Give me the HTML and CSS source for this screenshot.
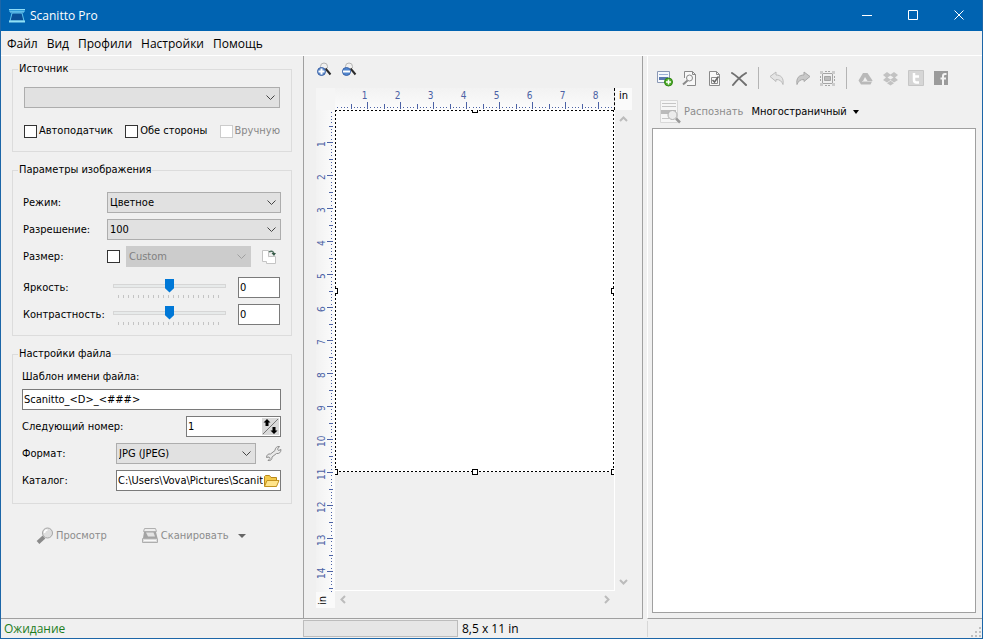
FILE: index.html
```html
<!DOCTYPE html>
<html lang="ru">
<head>
    <meta charset="UTF-8">
    <title>Scanitto Pro</title>
    <link rel="stylesheet" href="styles.css">
</head>
<body>

<div class="window">

    <header class="titlebar">
        <svg class="app-icon" width="18" height="16" viewBox="0 0 18 16">
            <path d="M1 1h16v3H1z" fill="#2f9bd8"/>
            <path d="M1 1.500h16M2 4h14" stroke="#8fdcf8"/>
            <path d="M4 5h10l2 8H2z" fill="#0a4f96" stroke="#5fc3ee"/>
            <path d="M1 12.500h16v2H1z" fill="#8fe0f5"/>
        </svg>
        <h1>Scanitto Pro</h1>
        <button class="win-btn" aria-label="Свернуть"><svg width="11" height="11" viewBox="0 0 11 11"><path d="M0 5.500h10"/></svg></button>
        <button class="win-btn" aria-label="Развернуть"><svg width="11" height="11" viewBox="0 0 11 11"><path d="M.5.5h9v9h-9z"/></svg></button>
        <button class="win-btn" aria-label="Закрыть"><svg width="11" height="11" viewBox="0 0 11 11"><path d="M.5.5l9 9M9.500.5l-9 9"/></svg></button>
    </header>

    <nav class="menu">
        <button>Файл</button>
        <button>Вид</button>
        <button>Профили</button>
        <button>Настройки</button>
        <button>Помощь</button>
    </nav>

    <main>

        <form class="settings">

            <fieldset class="source">
                <legend>Источник</legend>
                <select aria-label="Источник"><option></option></select>
                <div class="checks">
                    <label><input type="checkbox">Автоподатчик</label>
                    <label><input type="checkbox">Обе стороны</label>
                    <label class="off"><input type="checkbox" disabled>Вручную</label>
                </div>
            </fieldset>

            <fieldset class="image">
                <legend>Параметры изображения</legend>
                <div class="row">
                    <label for="mode">Режим:</label>
                    <select id="mode"><option>Цветное</option></select>
                </div>
                <div class="row">
                    <label for="dpi">Разрешение:</label>
                    <select id="dpi"><option>100</option></select>
                </div>
                <div class="row size">
                    <label for="size">Размер:</label>
                    <input type="checkbox" aria-label="Задать размер">
                    <select id="size" disabled><option>Custom</option></select>
                    <button type="button" class="icon-btn" aria-label="Повернуть">
                        <svg width="18" height="16" viewBox="0 0 18 16">
                            <path d="M1.500 1.500h6v11h-6z" fill="#fff" stroke="#c4c4c4"/>
                            <path d="M7.500 7.500h7v7h-9v-2" fill="#fff" stroke="#c4c4c4"/>
                            <path d="M8 3c2-1.500 4-1 5 1.500" fill="none" stroke="#4f6f5f" stroke-width="1.500"/>
                            <path d="M10.500 4H15L13 7z" fill="#355a48"/>
                        </svg>
                    </button>
                </div>
                <div class="row slider">
                    <label for="brightness">Яркость:</label>
                    <input type="range" id="brightness" min="-100" max="100" value="0">
                    <input type="text" aria-label="Яркость" value="0">
                </div>
                <div class="row slider">
                    <label for="contrast">Контрастность:</label>
                    <input type="range" id="contrast" min="-100" max="100" value="0">
                    <input type="text" aria-label="Контрастность" value="0">
                </div>
            </fieldset>

            <fieldset class="file">
                <legend>Настройки файла</legend>
                <label for="template">Шаблон имени файла:</label>
                <input type="text" id="template" value="Scanitto_&lt;D&gt;_&lt;###&gt;">
                <div class="row">
                    <label for="next">Следующий номер:</label>
                    <div class="field">
                        <input type="text" id="next" value="1">
                        <button type="button" class="spin" aria-label="Изменить номер">
                            <svg width="17" height="17" viewBox="0 0 17 17">
                                <path d="M16 1L1 16" stroke="#777"/>
                                <path d="M5 1l3.500 3.500h-2V8h-3V4.500h-2zM12 16l-3.500-3.500h2V9h3v3.500h2z"/>
                            </svg>
                        </button>
                    </div>
                </div>
                <div class="row">
                    <label for="format">Формат:</label>
                    <select id="format"><option>JPG (JPEG)</option></select>
                    <button type="button" class="icon-btn" aria-label="Параметры формата">
                        <svg width="17" height="17" viewBox="0 0 17 17">
                            <path d="M10 5.500c0-2.500 2-4.500 4.500-4L12.500 4l1 1.500 2.500-1c0 3-2 4.500-4.500 4L7 12c.3 2.500-1.500 4-4 3.500L5 13.500 4 12l-2.500.5C1.500 10 3.300 8.500 5.500 9z" fill="#e8e8e8" stroke="#8e8e8e"/>
                        </svg>
                    </button>
                </div>
                <div class="row">
                    <label for="folder">Каталог:</label>
                    <div class="field">
                        <input type="text" id="folder" value="C:\Users\Vova\Pictures\Scanitto Pro">
                        <button type="button" class="browse" aria-label="Обзор">
                            <svg width="17" height="15" viewBox="0 0 17 15">
                                <path d="M1.500 13V3.500l1-1h4l1.500 2h5.500V13z" fill="#f3c94b" stroke="#b98a1c"/>
                                <path d="M1.500 13.500L4 7.500h12l-2.500 6z" fill="#ffe48a" stroke="#c2921f"/>
                            </svg>
                        </button>
                    </div>
                </div>
            </fieldset>

            <div class="actions">
                <button type="button" disabled>
                    <svg width="18" height="18" viewBox="0 0 18 18">
                        <path d="M8 10l-6 5.500" stroke="#8a8a8a" stroke-width="4"/>
                        <circle cx="11.500" cy="6" r="5" fill="#dedede" stroke="#a5a5a5"/>
                        <path d="M8.500 6a3 3 0 0 1 3-3" fill="none" stroke="#fff" stroke-width="1.500"/>
                    </svg>
                    Просмотр
                </button>
                <button type="button" disabled>
                    <svg width="18" height="18" viewBox="0 0 18 18">
                        <path d="M3.500 1.500h11l1 3h-13z" fill="#ededed" stroke="#b0b0b0"/>
                        <path d="M3 5h12l1.500 6H2z" fill="#a4a4a4"/>
                        <path d="M5 5.500l2 4h7l-1.500-4z" fill="#e3e3e3"/>
                        <path d="M1.500 11.500h15v4h-15z" fill="#dcdcdc" stroke="#aeaeae"/>
                        <path d="M3 13.500h12" stroke="#f8f8f8"/>
                    </svg>
                    Сканировать
                    <i class="drop"></i>
                </button>
            </div>

        </form>

        <section class="preview">
            <div class="zoom">
                <button aria-label="Увеличить">
                    <svg width="16" height="16" viewBox="0 0 16 16">
                        <path d="M4.500 6V4.500a3.500 3.500 0 0 1 7 0V6" fill="none" stroke="#b5b5b5"/>
                        <path d="M9.500 6.500l5 6" stroke="#2b2b2b" stroke-width="2"/>
                        <circle cx="5.500" cy="9.500" r="4" fill="#5f8ccc" stroke="#3c62a6"/>
                        <path d="M5.500 6.500v6M2.500 9.500h6" stroke="#fff" stroke-width="2"/>
                    </svg>
                </button>
                <button aria-label="Уменьшить">
                    <svg width="16" height="16" viewBox="0 0 16 16">
                        <path d="M4.500 6V4.500a3.500 3.500 0 0 1 7 0V6" fill="none" stroke="#b5b5b5"/>
                        <path d="M9.500 6.500l5 6" stroke="#2b2b2b" stroke-width="2"/>
                        <circle cx="5.500" cy="9.500" r="4" fill="#4f86cf" stroke="#3c62a6"/>
                        <path d="M2 9.500h7" stroke="#fff" stroke-width="2"/>
                    </svg>
                </button>
            </div>

            <div class="canvas">
                <div class="corner"></div>

                <div class="ruler-x">
                    <ol>
                        <li>1</li><li>2</li><li>3</li><li>4</li><li>5</li><li>6</li><li>7</li><li>8</li>
                    </ol>
                    <svg class="ticks" width="100%" height="8">
                        <defs>
                            <pattern id="tx" x="32" width="33" height="8" patternUnits="userSpaceOnUse">
                                <path d="M0 0h1v7H0zM17 2h1v5h-1zM3 5h1v1H3zM7 5h1v1H7zM10 5h1v1h-1zM13 5h1v1h-1zM20 5h1v1h-1zM23 5h1v1h-1zM26 5h1v1h-1zM30 5h1v1h-1z" fill="#4c62a5"/>
                            </pattern>
                        </defs>
                        <rect width="100%" height="8" fill="url(#tx)"/>
                    </svg>
                </div>
                <div class="unit">in</div>

                <div class="ruler-y">
                    <ol>
                        <li>1</li><li>2</li><li>3</li><li>4</li><li>5</li><li>6</li><li>7</li>
                        <li>8</li><li>9</li><li>10</li><li>11</li><li>12</li><li>13</li><li>14</li>
                    </ol>
                    <svg class="ticks" width="8" height="100%">
                        <defs>
                            <pattern id="ty" y="32" width="8" height="33" patternUnits="userSpaceOnUse">
                                <path d="M0 0h6v1H0zM2 17h4v1H2zM4 3h1v1H4zM4 7h1v1H4zM4 10h1v1H4zM4 13h1v1H4zM4 20h1v1H4zM4 23h1v1H4zM4 26h1v1H4zM4 30h1v1H4z" fill="#4c62a5"/>
                            </pattern>
                        </defs>
                        <rect width="8" height="100%" fill="url(#ty)"/>
                    </svg>
                    <span>in</span>
                </div>

                <div class="bed">
                    <div class="page">
                        <i class="n"></i><i class="w"></i><i class="e"></i>
                        <i class="sw"></i><i class="s"></i><i class="se"></i>
                    </div>
                </div>

                <div class="scroll-y">
                    <svg width="9" height="6" viewBox="0 0 9 6"><path d="M1 5l3.500-3.500L8 5"/></svg>
                    <svg width="9" height="6" viewBox="0 0 9 6"><path d="M1 1l3.500 3.500L8 1"/></svg>
                </div>
                <div class="scroll-x">
                    <svg width="6" height="9" viewBox="0 0 6 9"><path d="M5 1L1.500 4.500 5 8"/></svg>
                    <svg width="6" height="9" viewBox="0 0 6 9"><path d="M1 1l3.500 3.500L1 8"/></svg>
                </div>
            </div>
        </section>

        <section class="result">
            <div class="tools">
                <button aria-label="Добавить">
                    <svg width="17" height="17" viewBox="0 0 17 17">
                        <path d="M1.500 1.500h12v11h-12z" fill="#f6f9fd" stroke="#8a98b5"/>
                        <path d="M3 4.500h9" stroke="#9db2d6"/>
                        <path d="M3 8.500h9" stroke="#5b79ae" stroke-width="3"/>
                        <circle cx="12.500" cy="12" r="4" fill="#4fae2a" stroke="#2f8414"/>
                        <path d="M12.500 9.500v5M10 12h5" stroke="#fff" stroke-width="1.500"/>
                    </svg>
                </button>
                <button aria-label="Просмотр страницы">
                    <svg width="17" height="17" viewBox="0 0 17 17" fill="none" stroke="#8a8a8a">
                        <path d="M3.500 8V1.500h8l3 3v11H6M11.500 1.500v3h3" fill="#f8f8f8"/>
                        <circle cx="8.500" cy="8" r="3"/>
                        <path d="M6.500 10.500L2 14.500" stroke-width="2"/>
                    </svg>
                </button>
                <button aria-label="Выбрать страницу">
                    <svg width="17" height="17" viewBox="0 0 17 17" fill="none" stroke="#8a8a8a">
                        <path d="M3.500 1.500h7l3 3v11h-10zM10.500 1.500v3h3" fill="#f8f8f8"/>
                        <path d="M5.500 7.500h6v6h-6z"/>
                        <path d="M6.500 10l2 2 4-5.500" stroke="#666" stroke-width="1.500"/>
                    </svg>
                </button>
                <button aria-label="Удалить">
                    <svg width="17" height="17" viewBox="0 0 17 17" fill="none" stroke="#707070" stroke-width="2" stroke-linecap="round">
                        <path d="M1 3c5 3 9 7 14 12M15 3C10 6 6 10 2 15"/>
                    </svg>
                </button>
                <hr>
                <button aria-label="Отменить" disabled>
                    <svg width="17" height="17" viewBox="0 0 17 17">
                        <path d="M1 6.500L7 2v3c5 0 8 3 7 9.500C12.500 11 11 9.500 7 9.500v2z" fill="#e4e4e4" stroke="#bbb"/>
                    </svg>
                </button>
                <button aria-label="Вернуть" disabled>
                    <svg width="17" height="17" viewBox="0 0 17 17">
                        <path d="M16 6.500L10 2v3c-5 0-8 3-7 9.500C4.500 11 6 9.500 10 9.500v2z" fill="#c9c9c9" stroke="#a8a8a8"/>
                    </svg>
                </button>
                <button aria-label="Обрезать" disabled>
                    <svg width="17" height="17" viewBox="0 0 17 17" fill="none" stroke="#a5a5a5">
                        <path d="M3.500 3.500h10v10h-10z"/>
                        <path d="M1 1h3v3H1zM13 1h3v3h-3zM1 13h3v3H1zM13 13h3v3h-3z" fill="#ccc" stroke="none"/>
                        <path d="M5.500 6.500h6v4h-6z" fill="#bbb"/>
                        <path d="M6 1.500h2M9 1.500h2M6 15.500h2M9 15.500h2M1.500 6v2M1.500 9v2M15.500 6v2M15.500 9v2"/>
                    </svg>
                </button>
                <hr>
                <button aria-label="Google Drive" disabled>
                    <svg width="15" height="15" viewBox="0 0 15 15">
                        <path d="M5 2h4.500l5 7.500-2 4H3L.5 9.500z" fill="#b9b9b9"/>
                        <path d="M7 6l-2 4h4.500z" fill="#f0f0f0"/>
                        <path d="M4 10.500h10" stroke="#d8d8d8"/>
                    </svg>
                </button>
                <button aria-label="Dropbox" disabled>
                    <svg width="15" height="15" viewBox="0 0 15 15" fill="#c2c2c2">
                        <path d="M4 1l3.500 2.500L11 1l4 3-3 2.500L15 9l-4 2.500-3.500-2.500L4 11.500 0 9l3-2.500L0 4z"/>
                        <path d="M7.500 4.500L4.500 6.500l3 2 3-2z" fill="#f0f0f0"/>
                        <path d="M4 12.200l3.500-2.400 3.500 2.400-3.500 2.300z"/>
                    </svg>
                </button>
                <button aria-label="Twitter" disabled>
                    <svg width="16" height="16" viewBox="0 0 16 16">
                        <path d="M.5.5h15v15H.5z" fill="#d6d6d6" stroke="#c6c6c6"/>
                        <path d="M6 3v7q0 2.500 2.500 2.500H11M6 6.500h5" fill="none" stroke="#fff" stroke-width="2.500"/>
                    </svg>
                </button>
                <button aria-label="Facebook" disabled>
                    <svg width="14" height="14" viewBox="0 0 14 14">
                        <path d="M0 0h14v14H0z" fill="#9b9b9b"/>
                        <path d="M9 14V5q0-2 2-2h1.500M6.500 7.500H12" fill="none" stroke="#f4f4f4" stroke-width="2"/>
                    </svg>
                </button>
            </div>

            <div class="ocr">
                <button disabled>
                    <svg width="24" height="24" viewBox="0 0 24 24">
                        <path d="M2.500.5h17v22h-17z" fill="#f6f6f6" stroke="#d8d8d8"/>
                        <path d="M4 3.500h14M4 6.500h14M4 18.500h7" stroke="#c6c6c6"/>
                        <path d="M3 10h15v4H3z" fill="#bbb"/>
                        <circle cx="14.500" cy="15" r="4.500" fill="#ececec" stroke="#b0b0b0"/>
                        <path d="M18 18.500l4 4" stroke="#9a9a9a" stroke-width="2.500"/>
                    </svg>
                    Распознать
                </button>
                <button>Многостраничный <i class="drop"></i></button>
            </div>

            <div class="pages"></div>
        </section>

    </main>

    <footer class="status">
        <output>Ожидание</output>
        <div class="progress"></div>
        <span class="dims">8,5 x 11 in</span>
        <svg class="grip" width="11" height="11" viewBox="0 0 11 11">
            <path d="M8 0h2v2H8zM8 4h2v2H8zM8 8h2v2H8zM4 4h2v2H4zM4 8h2v2H4zM0 8h2v2H0z"/>
        </svg>
    </footer>

</div>

</body>

</html>
```
FILE: styles.css
```css
* {
    box-sizing: border-box;
}

body {
    margin: 0;
    color: #000;
    font: 11px/14px "DejaVu Sans Condensed", "DejaVu Sans", sans-serif;
}

button, input, select {
    margin: 0;
    font: inherit;
    color: inherit;
}
button {
    display: flex;
    align-items: center;
    padding: 0;
    border: 0;
    background: none;
}
svg {
    display: block;
    flex: none;
}

.window {
    display: flex;
    flex-direction: column;
    height: 100vh;
    border: 1px solid #1c66a8;
    border-top: 0;
    background: #f0f0f0;
}

/* title bar and menu */

.titlebar {
    display: flex;
    align-items: center;
    height: 31px;
    padding-left: 7px;
    background: #0063b1;
    color: #fff;
}
.titlebar h1 {
    flex: 1;
    margin: 0 0 0 4px;
    font: 12px/16px "Open Sans", sans-serif;
}
.win-btn {
    justify-content: center;
    width: 46px;
    height: 31px;
}
.win-btn path {
    fill: none;
    stroke: #fff;
}

.menu {
    display: flex;
    gap: 9px;
    height: 25px;
    padding: 2px 0 0 6px;
    border-bottom: 1px solid #fff;
    font: 12px/16px "Open Sans", sans-serif;
}

main {
    flex: 1;
    display: grid;
    grid-template-columns: 302px 340px 1fr;
    min-height: 0;
}

/* settings */

.settings {
    display: flex;
    flex-direction: column;
    gap: 11px;
    padding: 6px 11px;
    border-bottom: 1px solid #a0a0a0;
}
fieldset {
    display: flex;
    flex-direction: column;
    gap: 6px;
    min-width: 0;
    margin: 0;
    padding: 10px;
    border: 1px solid #dcdcdc;
}
legend {
    margin-left: -5px;
    padding: 0 1px;
}
.source {
    padding: 11px 11px 13px;
}
.image {
    padding-top: 15px;
}
.file {
    padding: 9px 10px 12px 9px;
}
.source legend {
    margin-left: -6px;
}
.file legend {
    margin-left: -4px;
}

select {
    width: 100%;
    height: 21px;
    padding: 0 20px 0 2px;
    border: 1px solid #adadad;
    border-radius: 0;
    appearance: none;
    background: #e1e1e1 url("data:image/svg+xml,%3Csvg xmlns='http://www.w3.org/2000/svg' width='9' height='6'%3E%3Cpath d='M.5.5l4 4 4-4' fill='none' stroke='%23444'/%3E%3C/svg%3E") no-repeat right 4px center;
}
select:disabled {
    border-color: #ccc;
    background-color: #ccc;
    background-image: url("data:image/svg+xml,%3Csvg xmlns='http://www.w3.org/2000/svg' width='9' height='6'%3E%3Cpath d='M.5.5l4 4 4-4' fill='none' stroke='%23a0a0a0'/%3E%3C/svg%3E");
    color: #808080;
    opacity: 1;
}
input[type=text] {
    width: 100%;
    height: 21px;
    padding: 0 1px;
    border: 1px solid #7a7a7a;
    background: #fff;
}
input[type=checkbox] {
    flex: none;
    width: 13px;
    height: 13px;
    border: 1px solid #333;
    appearance: none;
    background: #fff;
}
input[type=checkbox]:disabled {
    border-color: #ccc;
}

.checks {
    display: flex;
    justify-content: space-between;
    margin-top: 10px;
}
.checks label {
    display: flex;
    align-items: center;
    gap: 2px;
}
.off {
    color: #888;
}

.row {
    display: flex;
    align-items: center;
    height: 21px;
}
.row label {
    flex: none;
    width: 84px;
}
.size select {
    margin: 0 10px 0 6px;
}
.icon-btn {
    flex: none;
}
.size .icon-btn {
    width: 20px;
}
.slider:nth-of-type(4) {
    margin-top: 4px;
}
.slider input[type=text] {
    flex: none;
    width: 42px;
    margin: 0 1px 0 12px;
}

input[type=range] {
    flex: 1;
    min-width: 0;
    height: 21px;
    margin-left: 6px;
    appearance: none;
    background: repeating-linear-gradient(90deg, #c4c4c4 0 1px, transparent 1px 5px) no-repeat 5px 18px / 103px 3px;
}
input[type=range]::-webkit-slider-runnable-track {
    height: 4px;
    margin-bottom: 4px;
    border: 1px solid #d6d6d6;
    background: #e7eaea;
}
input[type=range]::-webkit-slider-thumb {
    width: 9px;
    height: 14px;
    margin-top: -6px;
    appearance: none;
    background: #0078d7;
    clip-path: polygon(0 0, 100% 0, 100% 70%, 50% 100%, 0 70%);
}

.file .row label {
    width: 94px;
}
.file .row label[for=next] {
    width: 164px;
}
.file > input {
    margin-top: -1px;
}
.file .row select {
    flex: none;
    width: 140px;
    margin-right: 9px;
}
.field {
    flex: 1;
    display: flex;
    min-width: 0;
    border: 1px solid #7a7a7a;
    background: #fff;
}
.field input[type=text] {
    flex: 1;
    min-width: 0;
    height: 19px;
    padding-right: 0;
    border: 0;
    background: none;
}
.spin {
    margin: 1px;
    background: #d9d9d9;
}

.actions {
    display: flex;
    gap: 34px;
    padding: 12px 0 0 24px;
}
.actions button, .ocr button {
    gap: 2px;
}
button:disabled {
    color: #8c8c8c;
}
.drop {
    margin-left: 8px;
    border: 4px solid transparent;
    border-top-color: currentColor;
    border-bottom: 0;
}
.ocr .drop {
    margin-left: 4px;
    border-width: 4px 3px 0;
}
.actions .drop {
    color: #666;
}

/* preview */

.preview {
    display: flex;
    flex-direction: column;
    padding: 6px 10px 10px 12px;
    border: solid #a0a0a0;
    border-width: 0 1px 1px;
}
.zoom {
    display: flex;
    gap: 9px;
    height: 26px;
}
.zoom button {
    height: 16px;
}
.canvas {
    flex: 1;
    display: grid;
    grid-template: 22px 1fr 17px / 19px 1fr 17px;
    min-height: 0;
}
.corner {
    margin-bottom: -3px;
    border-bottom: 1px dashed #000;
    background: #f5f5f5;
}

.canvas ol {
    display: flex;
    margin: 0;
    padding: 0;
    list-style: none;
    color: #4c62a5;
    font-size: 10px;
    line-height: 13px;
    text-align: center;
}
.ruler-x {
    overflow: hidden;
    border-right: 1px dashed #000;
    background: linear-gradient(#f2f2f2, #fcfcfc);
}
.ruler-x ol {
    padding: 1px 0 0 13px;
}
.ruler-x li {
    flex: none;
    width: 33px;
}
.unit {
    padding-top: 1px;
    background: #fafafa;
    text-align: center;
}
.ruler-y {
    display: flex;
    position: relative;
    grid-row: 2 / 4;
    overflow: hidden;
    background: linear-gradient(90deg, #f2f2f2, #fcfcfc);
}
.ruler-y ol {
    flex-direction: column;
    width: 11px;
    padding-top: 18px;
}
.ruler-y li {
    flex: none;
    display: flex;
    align-items: center;
    justify-content: center;
    height: 33px;
    writing-mode: vertical-rl;
    transform: rotate(180deg);
}
.ruler-y span {
    position: absolute;
    left: 0;
    bottom: 0;
    width: 19px;
    height: 16px;
    padding-top: 3px;
    background: #fafafa;
    writing-mode: vertical-rl;
    transform: rotate(180deg);
}

.bed {
    border: solid #fff;
    border-width: 0 1px 1px 0;
}
/* selection frame: 2px on, 2px off on every side */
.page {
    --dash: #000 0 2px, transparent 2px 4px;
    position: relative;
    aspect-ratio: 279 / 362;
    background:
        repeating-linear-gradient(90deg, var(--dash)) top / 100% 1px no-repeat,
        repeating-linear-gradient(90deg, var(--dash)) bottom / 100% 1px no-repeat,
        repeating-linear-gradient(var(--dash)) left / 1px 100% no-repeat,
        repeating-linear-gradient(var(--dash)) right / 1px 100% no-repeat,
        #fff;
}
.page i {
    position: absolute;
    width: 6px;
    height: 6px;
    border: 1px solid #000;
    background: #fff;
}
.page .n { top: 0; left: calc(50% - 3px); height: 3px; border-top: 0; }
.page .w { left: 0; top: calc(50% - 3px); width: 3px; border-left: 0; }
.page .e { right: 0; top: calc(50% - 3px); width: 3px; border-right: 0; }
.page .s { bottom: -3px; left: calc(50% - 3px); }
.page .sw { bottom: -3px; left: 0; width: 3px; border-left: 0; }
.page .se { bottom: -3px; right: 0; width: 3px; border-right: 0; }

.scroll-y, .scroll-x {
    display: flex;
    align-items: center;
    justify-content: space-between;
}
.scroll-y {
    flex-direction: column;
    padding: 6px 0;
}
.scroll-x {
    padding: 0 5px;
}
.scroll-y path, .scroll-x path {
    fill: none;
    stroke: #bcbcbc;
    stroke-width: 2;
}

/* result */

.result {
    display: flex;
    flex-direction: column;
    min-width: 0;
    margin-left: 4px;
    padding: 13px 6px 5px 4px;
    border-left: 1px solid #fff;
    border-bottom: 1px solid #a0a0a0;
}
.tools {
    display: flex;
    align-items: center;
    gap: 8px;
    height: 18px;
    padding-left: 4px;
}
.tools hr {
    width: 1px;
    height: 22px;
    margin: 0 2px;
    border: 0;
    background: #b4b4b4;
}
.tools hr ~ hr ~ button {
    justify-content: center;
    width: 17px;
}
.ocr {
    display: flex;
    align-items: center;
    gap: 8px;
    height: 24px;
    margin: 13px 0 4px 6px;
}
.pages {
    flex: 1;
    border: 1px solid #a0a0a0;
    background: #fff;
}

/* status bar */

.status {
    display: flex;
    align-items: center;
    height: 19px;
    font: 12px/16px "Open Sans", sans-serif;
}
.status output {
    width: 302px;
    padding-left: 3px;
    color: #1d7d1d;
}
.progress {
    width: 155px;
    height: 17px;
    border: 1px solid #bcbcbc;
    background: #e6e6e6;
}
.dims {
    width: 190px;
    padding-left: 4px;
    border-right: 1px solid #d7d7d7;
}
.grip {
    align-self: flex-end;
    margin-left: auto;
    fill: #bfbfbf;
}
```
